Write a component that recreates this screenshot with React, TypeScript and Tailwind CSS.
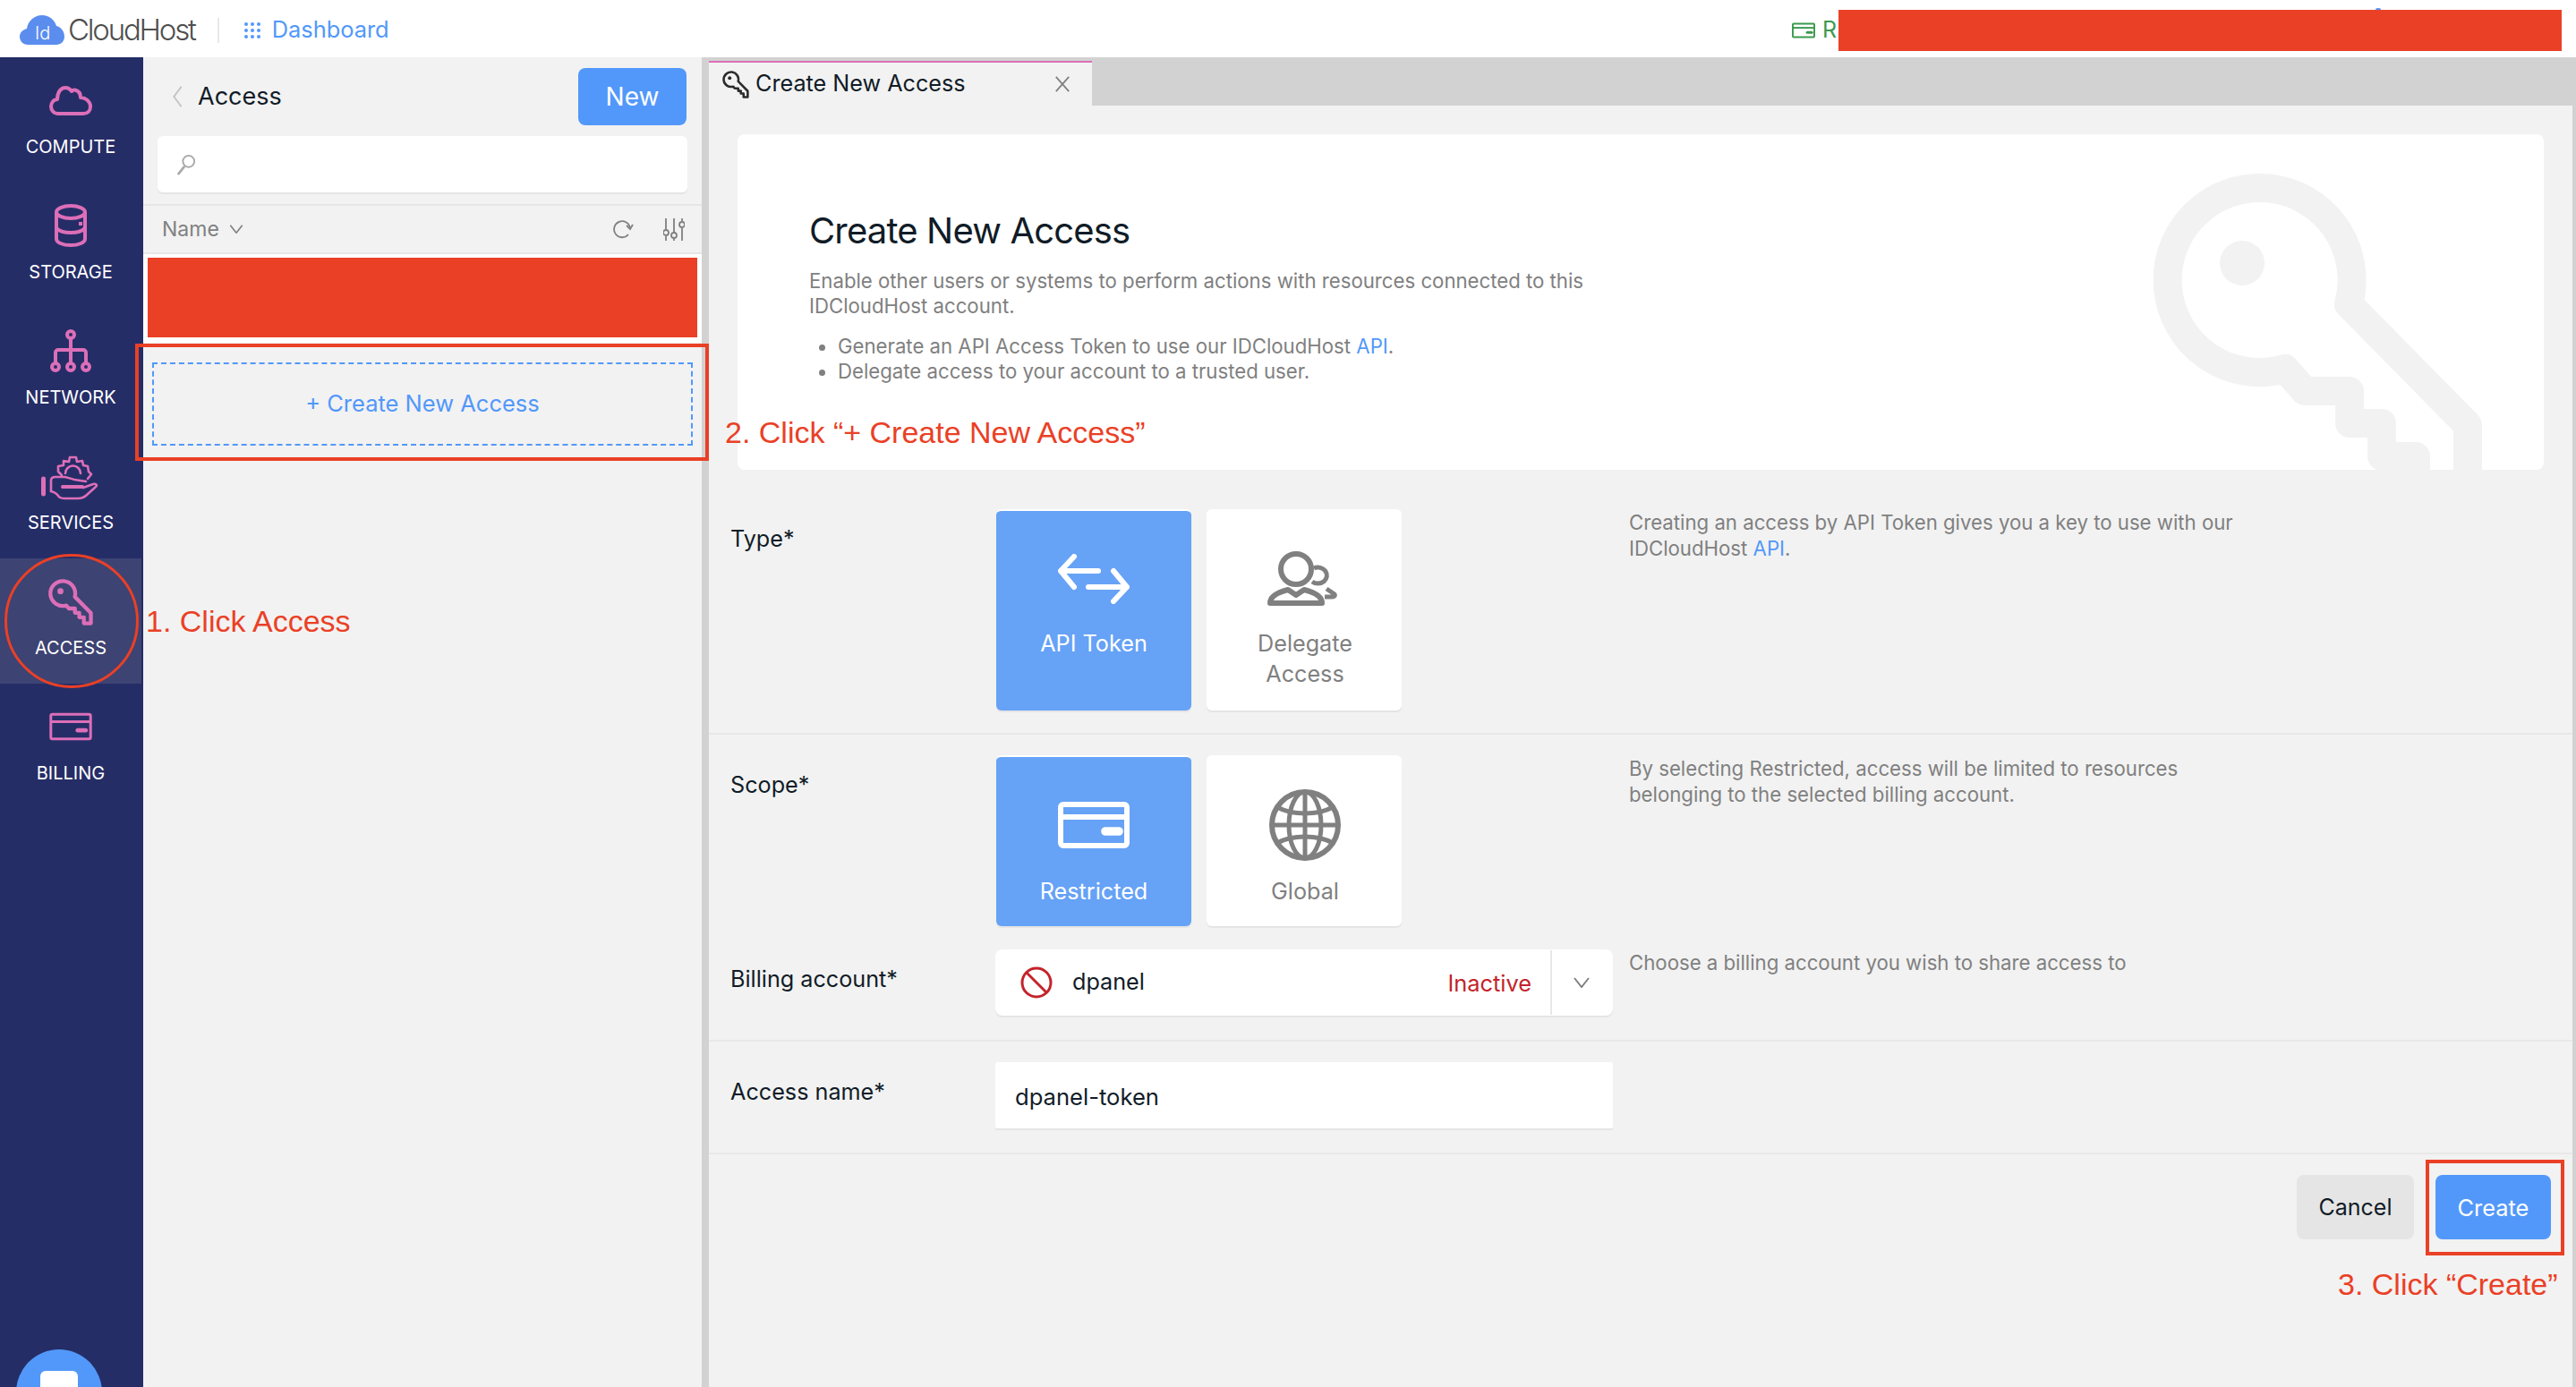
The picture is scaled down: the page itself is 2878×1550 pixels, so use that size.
import type { ReactNode } from "react";

const PINK = "#dc6fb8";

const KEY_PATH =
  "M2757 475V560H2699V510H2661V473H2625V437H2575L2553 412A103 103 0 1 1 2624 340L2757 475Z";

function KeyIcon({ className, color }: { className: string; color: string }) {
  return (
    <svg viewBox="2390 178 400 400" className={className} fill="none">
      <path d={KEY_PATH} stroke={color} strokeWidth="32" strokeLinejoin="round" />
      <circle cx="2505" cy="294" r="25" fill={color} />
    </svg>
  );
}

function CloudIcon() {
  return (
    <svg viewBox="0 0 48 34" className="h-[34px] w-[48px]" fill="none" stroke={PINK} strokeWidth="4" strokeLinejoin="round">
      <path d="M10 32C5 32 2 28 2 24c0-4 3-8 7-8 0-8 4-13 9-13 3 0 5 1 7 4 1-1 3-2 5-1 3 1 5 4 5 8 5 0 11 4 11 10 0 5-3 8-8 8Z" />
    </svg>
  );
}

function StorageIcon() {
  return (
    <svg viewBox="0 0 36 48" className="h-[48px] w-[36px]" fill="none" stroke={PINK} strokeWidth="4">
      <ellipse cx="18" cy="9" rx="16" ry="7" />
      <path d="M2 9v30c0 4 7 7 16 7s16-3 16-7V9" />
      <path d="M2 27c3 3 9 5 16 5s13-2 16-5" />
      <path d="M29 20v4" />
    </svg>
  );
}

function NetworkIcon() {
  return (
    <svg viewBox="0 0 48 48" className="h-[48px] w-[48px]" fill="none" stroke={PINK} strokeWidth="4">
      <circle cx="24" cy="6" r="4" />
      <path d="M24 10v27M7 37V26a3 3 0 0 1 3-3h28a3 3 0 0 1 3 3v11" />
      <circle cx="7" cy="42" r="4" />
      <circle cx="24" cy="42" r="4" />
      <circle cx="41" cy="42" r="4" />
    </svg>
  );
}

function ServicesIcon() {
  return (
    <svg viewBox="0 0 100 70" className="h-[70px] w-[100px] shrink-0" fill="none" stroke={PINK} strokeWidth="2.6" strokeLinejoin="round" strokeLinecap="round">
      <path d="M19.5 38v17" strokeWidth="5" />
      <path d="M28 52V40c0-3 2-4 5-4h10c3 0 7 2 11 3l13 2" />
      <path d="M41 47h22" strokeWidth="4" />
      <path d="M28 52c4 1 6 2 8 5 1 2 4 3 8 3h14c4 0 7-1 10-4l10-9c2-2 0-4-3-3l-11 4" />
      <path d="M40 34l-4-4v-6l6-1v-5l6 1 1-5h7l1 5 6-1 1 5 5 1 1 6 3 3-4 5" />
      <path d="M44 32a8.5 8.5 0 0 1 17 0" />
    </svg>
  );
}

function BillingIcon({ className, color, strokeWidth }: { className: string; color: string; strokeWidth: number }) {
  return (
    <svg viewBox="0 0 80 52" className={className} fill="none" stroke={color} strokeWidth={strokeWidth} strokeLinejoin="round">
      <rect x="3" y="3" width="74" height="46" rx="3" />
      <path d="M3 17h74" />
      <path d="M53 33h15" strokeLinecap="round" strokeWidth={strokeWidth * 1.6} />
    </svg>
  );
}

function ArrowsIcon() {
  return (
    <svg viewBox="0 0 80 56" className="h-[56px] w-[80px]" fill="none" stroke="white" strokeWidth="6" strokeLinecap="round" strokeLinejoin="round">
      <path d="M18 3 3 19l15 18M3 19h42" />
      <path d="M62 19l15 18-15 16M77 37H34" />
    </svg>
  );
}

function DelegateIcon() {
  return (
    <svg viewBox="0 0 120 85" className="h-[85px] w-[120px] shrink-0" fill="none" stroke="#808080" strokeWidth="6" strokeLinejoin="round">
      <circle cx="50" cy="31" r="17" />
      <path d="M21 69c0-7 8-12 20-15l9 6 9-6c12 3 20 8 20 15Z" />
      <path d="M70 30a10 9 0 1 1-2 15" strokeWidth="5" />
      <path d="M84 53l9 6c1 2-1 3-3 3h-8" strokeWidth="5" />
    </svg>
  );
}

function GlobeIcon() {
  return (
    <svg viewBox="0 0 80 80" className="h-[80px] w-[80px]" fill="none" stroke="#808080" strokeWidth="5">
      <circle cx="40" cy="40" r="37" strokeWidth="6" />
      <ellipse cx="40" cy="40" rx="18" ry="37" />
      <path d="M40 3v74M3 40h74" />
      <path d="M9 20c9 5 19 7 31 7s22-2 31-7M9 60c9-5 19-7 31-7s22 2 31 7" />
    </svg>
  );
}

function Chevron({ className, color }: { className: string; color: string }) {
  return (
    <svg viewBox="0 0 20 12" className={className} fill="none" stroke={color} strokeWidth="2">
      <path d="M2 1l8 10 8-10" />
    </svg>
  );
}

function NavItem({ label, icon, active }: { label: string; icon: ReactNode; active?: boolean }) {
  return (
    <div className={`flex h-[140px] w-[158px] flex-col items-center ${active ? "bg-[#3d4373]" : ""}`}>
      <div className="flex h-[96px] w-full items-center justify-center">{icon}</div>
      <span className="text-[20px] leading-[8px] text-white">{label}</span>
    </div>
  );
}

function Row({
  label,
  top,
  bottom,
  border,
  desc,
  children,
}: {
  label: string;
  top: string;
  bottom: string;
  border?: boolean;
  desc?: ReactNode;
  children: ReactNode;
}) {
  return (
    <div className={`flex ${top} ${bottom} ${border ? "border-b-2 border-[#e8e8e8]" : ""}`}>
      <div className="w-[320px] pl-[24px] pt-[16px] text-[25.2px] leading-[34px] text-[#111c27]">{label}</div>
      <div className="w-[690px] shrink-0">{children}</div>
      <div className="ml-[18px] w-[760px] text-[22.2px] leading-[29px] text-[#808080]">{desc}</div>
    </div>
  );
}

function ChoiceCard({
  label,
  icon,
  selected,
  labelTop = "mt-[15px]",
}: {
  label: ReactNode;
  icon: ReactNode;
  selected?: boolean;
  labelTop?: string;
}) {
  return (
    <div
      className={`flex w-[218px] flex-col items-center rounded-[6px] border-t-2 border-white text-center shadow-[0_2px_1px_#e4e4e4] text-[25.2px] leading-[34px] ${
        selected ? "bg-[#66a2f6] text-white" : "bg-white pl-[2px] text-[#808080]"
      }`}
    >
      <div className="mt-[36px] flex h-[80px] items-center justify-center">{icon}</div>
      <span className={labelTop}>{label}</span>
    </div>
  );
}

export default function App() {
  return (
    <div className="relative flex h-[1550px] w-[2878px] flex-col overflow-hidden bg-[#f2f2f2] font-[Inter,sans-serif]">
      {/* top bar */}
      <header className="flex h-[64px] shrink-0 items-center bg-white pl-[22px] pt-[3px]">
        <svg viewBox="0 0 50 33" className="h-[33px] w-[50px]">
          <path d="M9 33C4 33 0 29 0 24c0-5 4-8 8-9 1-8 8-15 17-15 8 0 14 5 16 12 5 1 9 6 9 12 0 5-4 9-9 9Z" fill="#5b8def" />
          <text x="17" y="27" fill="white" fontSize="20" fontWeight="300" fontFamily="Inter, sans-serif">Id</text>
        </svg>
        <span className="ml-[4px] text-[33px] font-light tracking-[-2.2px] text-[#4f4f4f]">CloudHost</span>
        <div className="ml-[25px] h-[28px] w-[2px] bg-[#e8e8e8]" />
        <div className="ml-[28px] grid grid-cols-3 gap-[3px]">
          {[0, 1, 2, 3, 4, 5, 6, 7, 8].map((dot) => (
            <span key={dot} className="h-[4px] w-[4px] rounded-full bg-[#5298fa]" />
          ))}
        </div>
        <span className="ml-[13px] text-[25.4px] text-[#5298fa]">Dashboard</span>
        <div className="ml-auto flex items-center pr-[16px]">
          <BillingIcon className="h-[18px] w-[26px]" color="#3d9a4f" strokeWidth={6} />
          <span className="ml-[8px] w-[18px] text-[25px] text-[#3d9a4f]">R</span>
          <div className="h-[46px] w-[808px] bg-[#ea4026]" />
        </div>
      </header>

      <div className="flex min-h-0 flex-1">
        {/* sidebar */}
        <aside className="relative w-[160px] shrink-0 bg-[#252d67]">
          <NavItem label="COMPUTE" icon={<CloudIcon />} />
          <NavItem label="STORAGE" icon={<StorageIcon />} />
          <NavItem label="NETWORK" icon={<NetworkIcon />} />
          <NavItem label="SERVICES" icon={<ServicesIcon />} />
          <NavItem label="ACCESS" active icon={<KeyIcon className="h-[54px] w-[54px]" color={PINK} />} />
          <NavItem label="BILLING" icon={<BillingIcon className="h-[32px] w-[48px]" color={PINK} strokeWidth={5} />} />
          <div className="absolute left-[18px] top-[1444px] h-[96px] w-[96px] rounded-full bg-[#5298fa]">
            <div className="ml-[27px] mt-[24px] h-[40px] w-[42px] rounded-[6px] bg-white" />
          </div>
        </aside>

        {/* list panel */}
        <section className="w-[624px] shrink-0">
          <div className="flex h-[88px] items-center pr-[17px] pl-[32px]">
            <svg viewBox="0 0 12 26" className="h-[24px] w-[12px]" fill="none" stroke="#c4c4c4" strokeWidth="2">
              <path d="M11 1 2 13l9 12" />
            </svg>
            <span className="ml-[17px] text-[27px] text-[#111c27]">Access</span>
            <button className="ml-auto h-[64px] w-[121px] rounded-[8px] bg-[#5298fa] text-[28px] text-white">New</button>
          </div>
          <div className="mx-[16px] flex h-[63px] items-center rounded-[6px] bg-white pl-[21px] shadow-[0_2px_1px_#e4e4e4]">
            <svg viewBox="0 0 24 26" className="h-[24px] w-[22px]" fill="none" stroke="#a8a8a8" strokeWidth="2">
              <circle cx="15" cy="9" r="7" />
              <path d="M10 15 2 25" strokeWidth="3" />
            </svg>
          </div>
          <div className="mt-[13px] flex h-[56px] items-center border-y-2 border-[#e6e6e6] pl-[21px] pr-[19px]">
            <span className="text-[23px] text-[#808080]">Name</span>
            <Chevron className="ml-[10px] h-[10px] w-[18px]" color="#808080" />
            <svg viewBox="0 0 24 24" className="ml-auto h-[24px] w-[24px]" fill="none" stroke="#808080" strokeWidth="1.8">
              <path d="M18 18A9 9 0 1 1 20 11" />
              <path d="M23 7l-3 5-4-4" />
            </svg>
            <svg viewBox="0 0 24 26" className="ml-[33px] h-[26px] w-[24px]" fill="none" stroke="#808080" strokeWidth="1.8">
              <path d="M3 1v12M3 21v5M12 1v16M12 24v2M21 1v3M21 12v14" />
              <circle cx="3" cy="17" r="3" />
              <circle cx="12" cy="20" r="3" />
              <circle cx="21" cy="8" r="3" />
            </svg>
          </div>
          <div className="h-[99px] bg-white px-[5px] pt-[4px]">
            <div className="h-[89px] bg-[#ea4026]" />
          </div>
          <div className="mx-[10px] mt-[22px] flex h-[93px] items-center justify-center border-2 border-dashed border-[#5298fa] text-[25.5px] text-[#5298fa]">
            + Create New Access
          </div>
        </section>

        <div className="w-[8px] shrink-0 bg-[#d2d2d2]" />

        {/* detail panel */}
        <main className="flex min-w-0 flex-1 flex-col">
          <div className="h-[54px] shrink-0 bg-[#d2d2d2] pt-[4px]">
            <div className="flex h-[50px] w-[428px] items-center border-t-2 border-[#dc6fb8] bg-[#f2f2f2] pl-[14px] pr-[24px]">
              <KeyIcon className="h-[32px] w-[32px]" color="#2b2b2b" />
              <span className="ml-[6px] text-[25.2px] text-[#111c27]">Create New Access</span>
              <svg viewBox="0 0 20 20" className="ml-auto h-[18px] w-[18px]" fill="none" stroke="#808080" strokeWidth="2">
                <path d="M2 1l16 18M18 1 2 19" />
              </svg>
            </div>
          </div>

          <div className="px-[32px] pt-[32px]">
            <div className="relative h-[375px] overflow-hidden rounded-[8px] bg-white pl-[80px] pt-[84px]">
              <svg viewBox="2380 150 462 375" className="absolute right-0 top-0 h-[375px] w-[462px]" fill="none">
                <path d={KEY_PATH} stroke="#f2f2f2" strokeWidth="32" strokeLinejoin="round" />
                <circle cx="2505" cy="294" r="25" fill="#f2f2f2" />
              </svg>
              <h1 className="text-[40px] leading-[48px] tracking-[-0.85px] text-[#111c27]">Create New Access</h1>
              <p className="mt-[18px] w-[900px] text-[22.2px] leading-[28px] text-[#808080]">
                Enable other users or systems to perform actions with resources connected to this IDCloudHost account.
              </p>
              <ul className="mt-[17px] list-disc pl-[32px] text-[22.2px] leading-[28px] text-[#808080]">
                <li>
                  Generate an API Access Token to use our IDCloudHost <span className="text-[#5298fa]">API</span>.
                </li>
                <li>Delegate access to your account to a trusted user.</li>
              </ul>
            </div>
          </div>

          <Row
            label="Type*"
            top="pt-[44px]"
            bottom="pb-[25px]"
            border
            desc={
              <>
                Creating an access by API Token gives you a key to use with our
                <br />
                IDCloudHost <span className="text-[#5298fa]">API</span>.
              </>
            }
          >
            <div className="ml-[1px] flex h-[225px] gap-[17px]">
              <ChoiceCard selected icon={<ArrowsIcon />} label="API Token" />
              <ChoiceCard
                icon={<DelegateIcon />}
                label={
                  <>
                    Delegate
                    <br />
                    Access
                  </>
                }
              />
            </div>
          </Row>

          <Row
            label="Scope*"
            top="pt-[23px]"
            bottom="pb-[26px]"
            desc={
              <>
                By selecting Restricted, access will be limited to resources
                <br />
                belonging to the selected billing account.
              </>
            }
          >
            <div className="ml-[1px] flex h-[191px] gap-[17px]">
              <ChoiceCard selected labelTop="mt-[17px]" icon={<BillingIcon className="h-[52px] w-[80px]" color="white" strokeWidth={6} />} label="Restricted" />
              <ChoiceCard labelTop="mt-[17px]" icon={<GlobeIcon />} label="Global" />
            </div>
          </Row>

          <Row
            label="Billing account*"
            top=""
            bottom="pb-[27px]"
            border
            desc="Choose a billing account you wish to share access to"
          >
            <div className="flex h-[74px] items-center rounded-[8px] bg-white shadow-[0_2px_1px_#e4e4e4]">
              <svg viewBox="0 0 36 36" className="ml-[28px] h-[36px] w-[36px]" fill="none" stroke="#c4232b" strokeWidth="3">
                <circle cx="18" cy="18" r="16" />
                <path d="M7 7l22 22" />
              </svg>
              <span className="ml-[22px] text-[25.2px] text-[#111c27]">dpanel</span>
              <span className="ml-auto pt-[3px] text-[25.4px] text-[#c4232b]">Inactive</span>
              <div className="ml-[21px] h-[72px] w-[2px] bg-[#e8e8e8]" />
              <Chevron className="ml-[23px] mr-[25px] h-[12px] w-[20px]" color="#808080" />
            </div>
          </Row>

          <Row label="Access name*" top="pt-[23px]" bottom="pb-[27px]" border>
            <div className="flex h-[74px] items-center rounded-[2px] bg-white pl-[22px] pt-[4px] text-[25.6px] text-[#111c27] shadow-[0_2px_1px_#e4e4e4]">
              dpanel-token
            </div>
          </Row>

          <div className="flex justify-end gap-[24px] pr-[24px] pt-[23px]">
            <button className="h-[72px] w-[131px] rounded-[8px] bg-[#e5e5e5] pt-[2px] text-[25px] text-[#111c27]">Cancel</button>
            <button className="h-[72px] w-[129px] rounded-[8px] bg-[#5298fa] pt-[2px] text-[25.4px] text-white">Create</button>
          </div>
        </main>

        <div className="w-[4px] shrink-0 bg-[#d2d2d2]" />
      </div>

      {/* tutorial annotations drawn over the screenshot */}
      <div className="absolute left-[2654px] top-[9px] h-[2px] w-[6px] rounded-t-full bg-[#5298fa]" />
      <div className="absolute left-[151px] top-[384px] h-[131px] w-[641px] border-4 border-[#ea4026]" />
      <div className="absolute left-[5px] top-[619px] h-[150px] w-[150px] rounded-full border-[3px] border-[#ea4026]" />
      <div className="absolute left-[2710px] top-[1296px] h-[107px] w-[155px] border-4 border-[#ea4026]" />
      <span className="absolute left-[163px] top-[674px] font-['Liberation_Sans',sans-serif] text-[34px] leading-[40px] text-[#ea4026]">1. Click Access</span>
      <span className="absolute left-[810px] top-[463px] font-['Liberation_Sans',sans-serif] text-[34px] leading-[40px] text-[#ea4026]">2. Click “+ Create New Access”</span>
      <span className="absolute left-[2612px] top-[1415px] font-['Liberation_Sans',sans-serif] text-[34px] leading-[40px] text-[#ea4026]">3. Click “Create”</span>
    </div>
  );
}
